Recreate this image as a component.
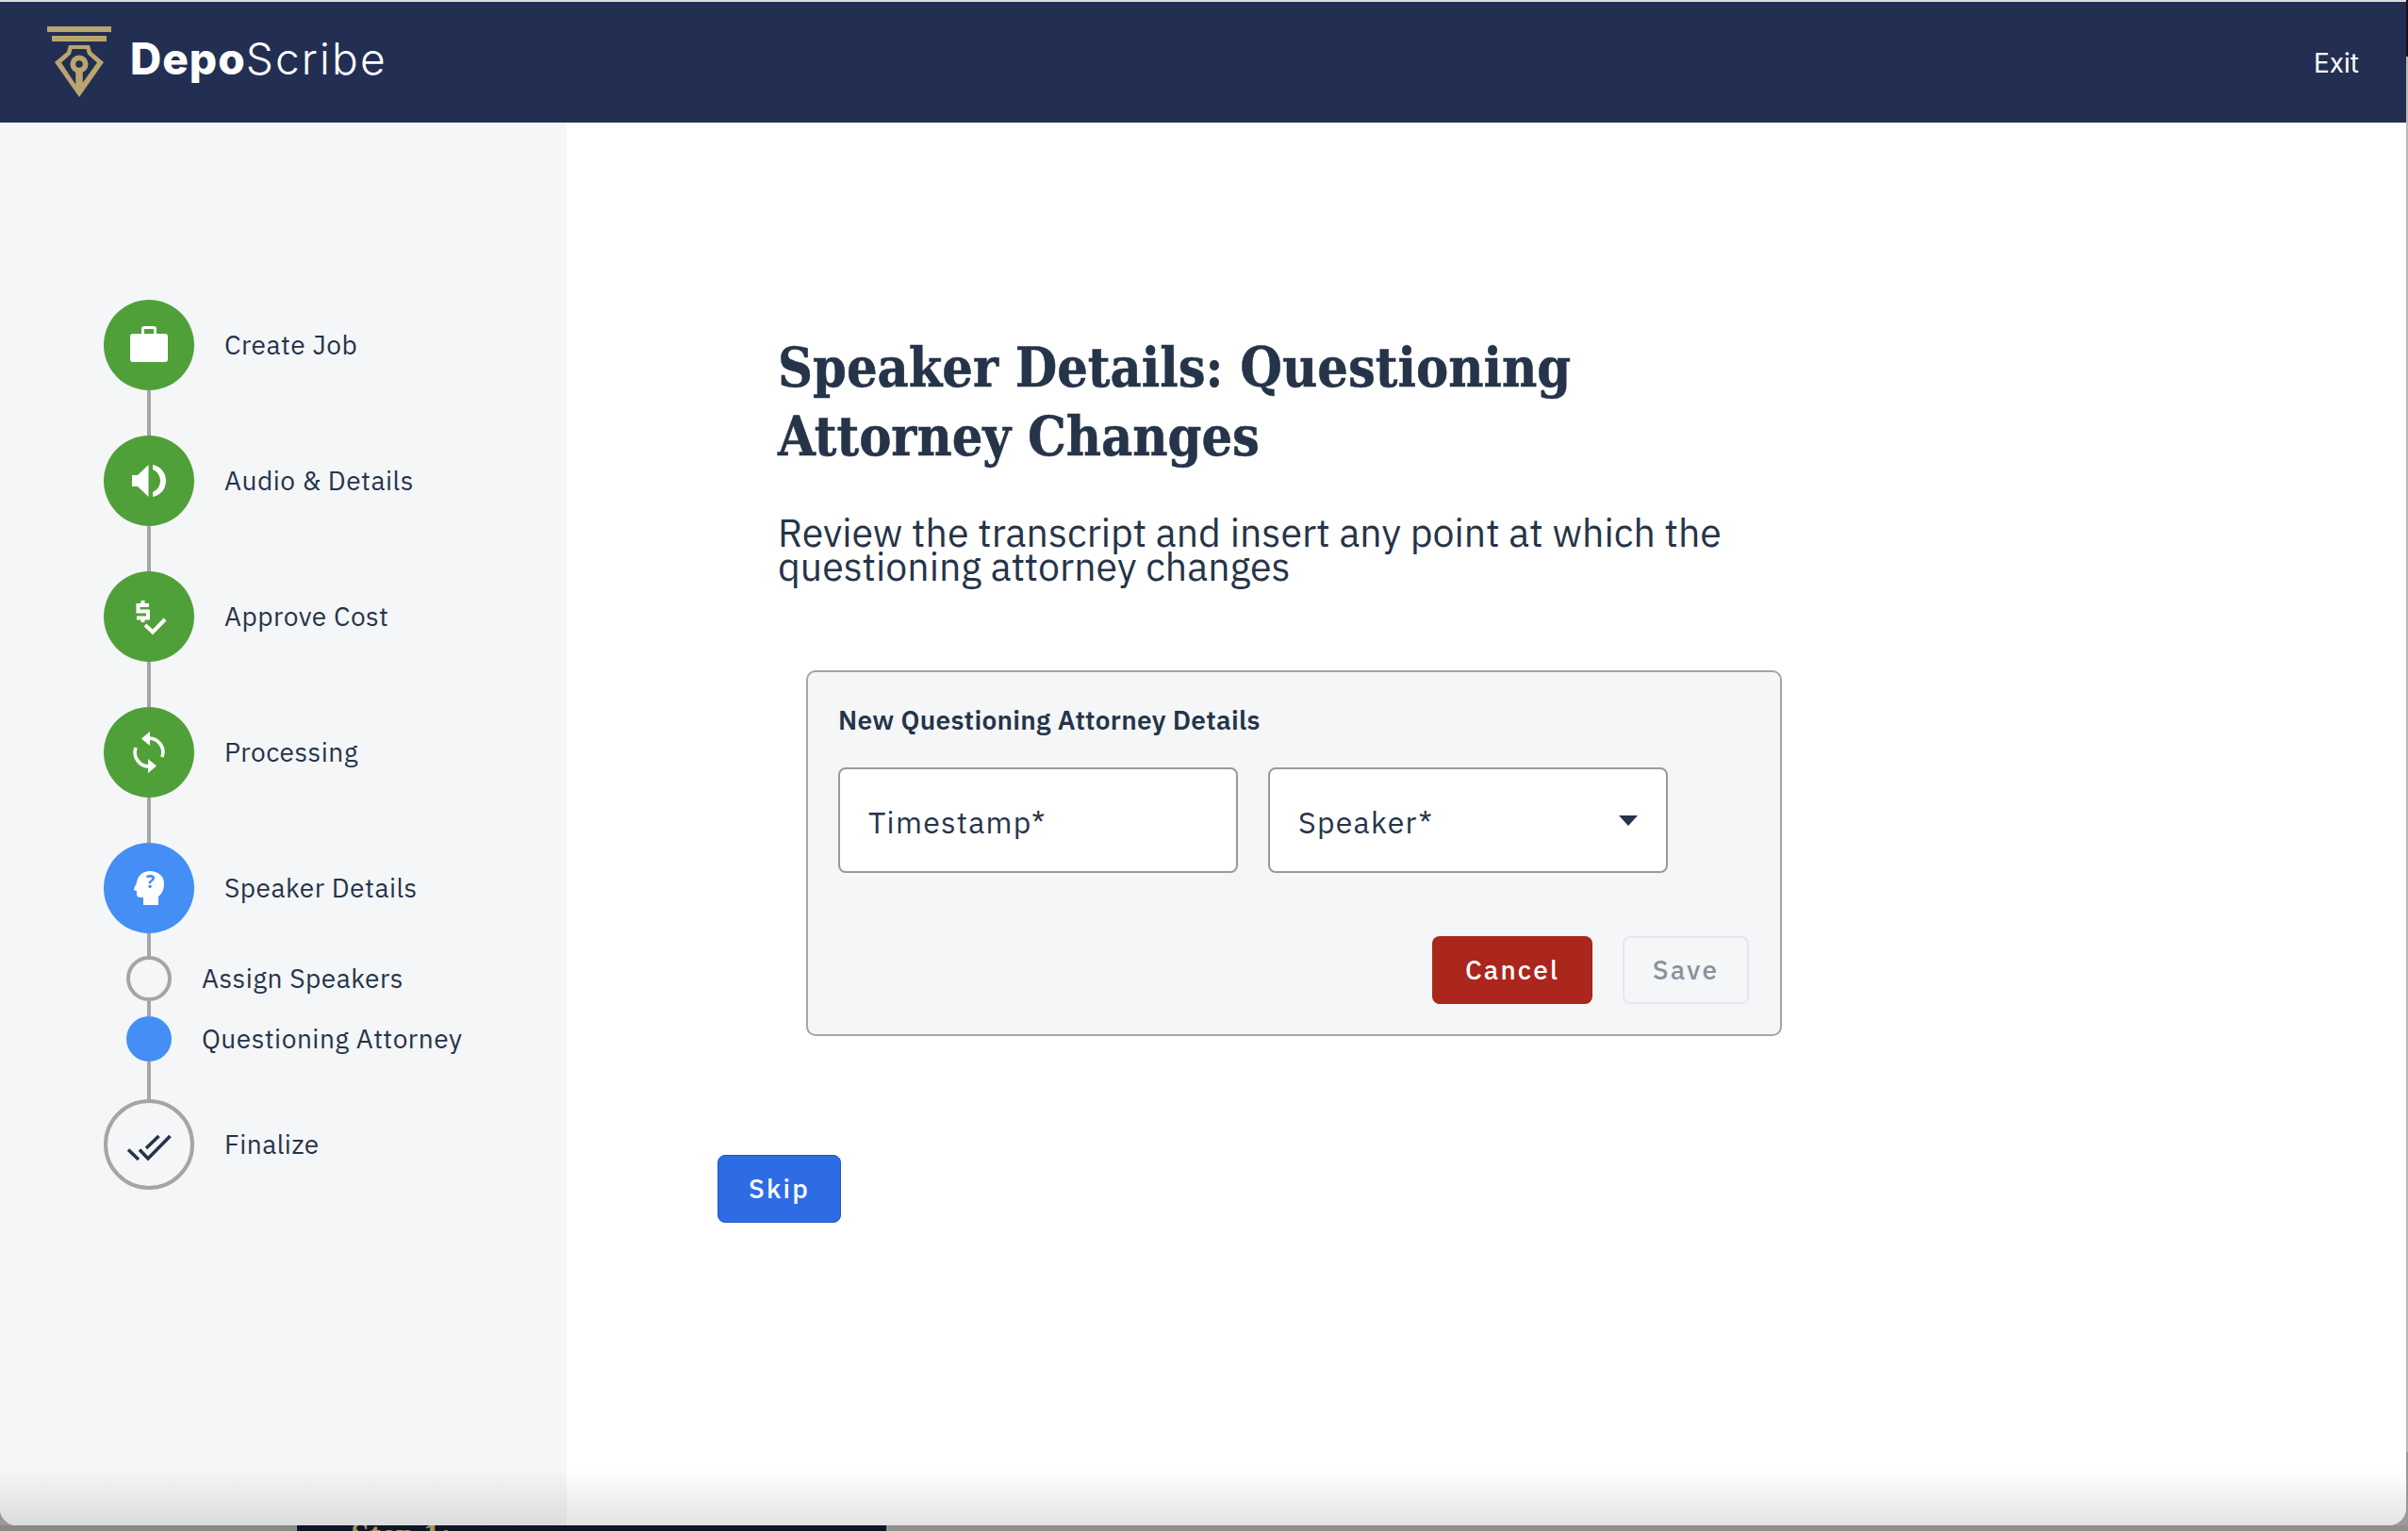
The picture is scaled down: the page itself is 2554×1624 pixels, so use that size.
<div class="desktop">
  <div class="backstrip"><span class="step-peek">Step 1:</span></div>
  <div class="shell">
    <header class="topbar">
      <div class="brand">
        <svg class="logo" width="80" height="90" viewBox="0 0 80 90" aria-hidden="true">
          <rect x="0" y="0" width="68" height="6" fill="#b9a56d" />
          <rect x="5" y="10" width="58" height="6" fill="#b9a56d" />
          <path d="M23 20 H45 L47 27 L60 38 L34 75 L8 38 L21 27 Z" fill="#b9a56d" />
          <path d="M26.5 24 H41.5 L43 29.5 L53 38.5 L37.5 60 V46 H30.5 V62 L15 38.5 L25 29.5 Z" fill="#222f53" />
          <circle cx="34" cy="40" r="9.5" fill="#b9a56d" />
          <circle cx="34" cy="40" r="3.8" fill="#222f53" />
          <rect x="30.5" y="46" width="7" height="24" fill="#b9a56d" />
        </svg>
        <span class="wordmark"><b>Depo</b>Scribe</span>
      </div>
      <span class="exit">Exit</span>
    </header>

    <div class="body">
      <aside class="sidebar">
        <div class="step">
          <span class="dot done">
            <svg width="96" height="96" viewBox="0 0 96 96"><path d="M41.5 36 V31 Q41.5 29.5 43 29.5 H53 Q54.5 29.5 54.5 31 V36" fill="none" stroke="#fff" stroke-width="3" /><rect x="28" y="36" width="40" height="30" rx="3" fill="#fff" /></svg>
          </span>
          <span class="label">Create Job</span>
        </div>
        <div class="line l48"></div>
        <div class="step">
          <span class="dot done">
            <svg width="96" height="96" viewBox="0 0 96 96"><path d="M30 42 H36 L47.5 31 V65 L36 54 H30 Z" fill="#fff" /><path d="M52 31 C62 33 66 41 66 48 C66 55 62 63 52 65 V60 C57 58 60 53 60 48 C60 43 57 38 52 36 Z" fill="#fff" /></svg>
          </span>
          <span class="label">Audio &amp; Details</span>
        </div>
        <div class="line l48"></div>
        <div class="step">
          <span class="dot done">
            <svg width="96" height="96" viewBox="0 0 96 96"><path d="M48 36 H36.5 V42.5 H47 V49.5 H35" fill="none" stroke="#fff" stroke-width="4" /><path d="M41.5 31 V36 M41.5 49 V54" stroke="#fff" stroke-width="4" /><path d="M44 57 L52 64.5 L65 51" fill="none" stroke="#fff" stroke-width="4" /></svg>
          </span>
          <span class="label">Approve Cost</span>
        </div>
        <div class="line l48"></div>
        <div class="step">
          <span class="dot done">
            <svg width="96" height="96" viewBox="0 0 96 96"><path d="M48 33 A15 15 0 0 1 62 53 M48 63 A15 15 0 0 1 34 43" fill="none" stroke="#fff" stroke-width="3.6" /><path d="M49 26 V41 L40 33.5 Z M47 70 V55 L56 62.5 Z" fill="#fff" /></svg>
          </span>
          <span class="label">Processing</span>
        </div>
        <div class="line l48"></div>
        <div class="step">
          <span class="dot active">
            <svg width="96" height="96" viewBox="0 0 96 96"><path d="M64 43 C64 35 57 30 49 30 C41 30 36 35 35 42 C35 44 32 47 32 49 C32 50 33 51 35 51 V55 C35 57 37 58 39 58 H42 V66 H58 V57 C62 54 64 49 64 43 Z" fill="#fff" /><text x="49.5" y="47.5" text-anchor="middle" class="q">?</text></svg>
          </span>
          <span class="label">Speaker Details</span>
        </div>
        <div class="line l24"></div>
        <div class="step sub">
          <span class="mini ring"></span>
          <span class="label">Assign Speakers</span>
        </div>
        <div class="line l16"></div>
        <div class="step sub">
          <span class="mini filled"></span>
          <span class="label">Questioning Attorney</span>
        </div>
        <div class="line l40"></div>
        <div class="step">
          <span class="dot todo">
            <svg width="96" height="96" viewBox="0 0 96 96" class="inring"><path d="M26 53.5 L37 64 M38 53.5 L47 63 L70.5 39 M45 52 L58.5 39" fill="none" stroke="#263449" stroke-width="3.6" /></svg>
          </span>
          <span class="label">Finalize</span>
        </div>
      </aside>

      <main class="main">
        <div class="intro">
          <h1>Speaker Details: Questioning Attorney Changes</h1>
          <p>Review the transcript and insert any point at which the questioning attorney changes</p>
          <section class="panel">
            <h2>New Questioning Attorney Details</h2>
            <div class="fields">
              <div class="field"><span>Timestamp*</span></div>
              <div class="field select"><span>Speaker*</span><i class="caret"></i></div>
            </div>
            <div class="actions">
              <button class="btn cancel">Cancel</button>
              <button class="btn save" disabled>Save</button>
            </div>
          </section>
        </div>
        <button class="btn skip">Skip</button>
      </main>
    </div>
    <div class="fade"></div>
  </div>
</div>

<style>
  :global(body) { margin: 0; background: #8f8f8c; }
  .desktop {
    position: relative;
    width: 2554px;
    height: 1624px;
    overflow: hidden;
    background: linear-gradient(#1a1020 0 60px, #b9b9b9 60px 1540px, #999 1540px);
    font-family: "IBM Plex Sans", "Noto Sans", sans-serif;
    color: #263449;
  }
  .backstrip {
    position: absolute;
    left: 0;
    right: 0;
    bottom: 0;
    height: 6px;
    background: linear-gradient(90deg, #8a8a85 0 315px, #0e1626 315px 940px, #8f8f8f 940px);
    overflow: hidden;
  }
  .step-peek {
    position: absolute;
    left: 372px;
    top: -10px;
    font: 700 36px/40px "Liberation Serif", serif;
    color: #a8935c;
  }
  .shell {
    position: absolute;
    left: 0;
    top: 2px;
    width: 2552px;
    height: 1616px;
    background: #fff;
    border-radius: 0 0 18px 18px;
    overflow: hidden;
    display: flex;
    flex-direction: column;
    box-shadow: 0 -2px 0 #ddd;
  }
  .topbar {
    flex: none;
    height: 128px;
    background: #222f53;
    display: flex;
    align-items: center;
    justify-content: space-between;
    padding: 0 50px 0 50px;
    color: #fff;
  }
  .brand { display: flex; align-items: flex-start; height: 128px; }
  .logo { margin-top: 26px; margin-right: 8px; flex: none; }
  .wordmark {
    font: 300 46px/52px Inter, sans-serif;
    margin-top: 34px;
    letter-spacing: 2.2px;
  }
  .wordmark b { font-weight: 800; letter-spacing: 1px; }
  .exit { font: 400 28px/32px Inter, "Liberation Sans", sans-serif; margin-top: 2px; }

  .body { flex: 1; display: flex; min-height: 0; }
  .sidebar {
    flex: none;
    width: 601px;
    box-sizing: border-box;
    background: #f4f6f8;
    padding: 188px 0 0 110px;
  }
  .step { display: flex; align-items: center; gap: 32px; }
  .label { font-size: 28px; line-height: 36px; letter-spacing: 0.55px; white-space: nowrap; }
  .dot {
    flex: none;
    width: 96px;
    height: 96px;
    border-radius: 50%;
    display: block;
    box-sizing: border-box;
  }
  .dot svg { display: block; }
  .dot.done { background: #50a03a; }
  .dot.active { background: #448ef6; }
  .dot.todo { border: 4px solid #a5a5a5; }
  .inring { margin: -4px; }
  .q { font: 700 20px "Noto Sans", sans-serif; fill: #448ef6; }
  .line { width: 4px; margin-left: 46px; background: #a5a5a5; }
  .l48 { height: 48px; }
  .l24 { height: 24px; }
  .l16 { height: 16px; }
  .l40 { height: 40px; }
  .step.sub { margin-left: 24px; gap: 32px; height: 48px; }
  .mini {
    flex: none;
    width: 48px;
    height: 48px;
    border-radius: 50%;
    box-sizing: border-box;
  }
  .mini.ring { border: 4px solid #a5a5a5; }
  .mini.filled { background: #448ef6; }

  .main { flex: 1; padding: 0 0 0 160px; }
  .intro { padding: 223px 0 0 64px; width: 1100px; }
  h1 {
    margin: 0;
    font-family: "DejaVu Serif", "Liberation Serif", serif;
    font-weight: 700;
    font-stretch: condensed;
    font-size: 57px;
    line-height: 73px;
    width: 900px;
    color: #263449;
    -webkit-text-stroke: 0.5px #263449;
  }
  p {
    margin: 48px 0 0;
    font-size: 41px;
    line-height: 36px;
    letter-spacing: 0.06px;
    width: 1060px;
  }
  .panel {
    box-sizing: border-box;
    width: 1035px;
    height: 388px;
    margin: 92px 0 0 30px;
    padding: 33px 33px 0 32px;
    background: #f4f6f8;
    border: 2px solid #a5a5a5;
    border-radius: 10px;
  }
  h2 { margin: 0; font-size: 28px; line-height: 36px; font-weight: 600; letter-spacing: 0.33px; }
  .fields { display: flex; gap: 32px; margin-top: 32px; }
  .field {
    box-sizing: border-box;
    width: 424px;
    height: 112px;
    background: #fff;
    border: 2px solid #999;
    border-radius: 8px;
    display: flex;
    align-items: center;
    justify-content: space-between;
    padding: 3px 30px 0 30px;
    font-size: 32px;
    letter-spacing: 1.3px;
  }
  .caret {
    width: 0;
    height: 0;
    border-left: 10px solid transparent;
    border-right: 10px solid transparent;
    border-top: 11px solid #263449;
    margin-top: -3px;
  }
  .actions { display: flex; justify-content: flex-end; gap: 32px; margin-top: 67px; }
  .btn {
    box-sizing: border-box;
    height: 72px;
    border-radius: 8px;
    font: 500 28px/36px "IBM Plex Sans", "Noto Sans", sans-serif;
    letter-spacing: 2.2px;
    padding: 0;
  }
  .cancel { width: 170px; background: #ab261c; color: #fff; border: 0; }
  .save { width: 134px; background: #f4f6f8; color: #8a919c; border: 2px solid #e5e7eb; }
  .skip { display: block; width: 131px; margin-top: 126px; background: #2e6ce6; color: #fff; border: 1px solid #1e57c8; }

  .fade {
    position: absolute;
    left: 0;
    right: 0;
    bottom: 0;
    height: 60px;
    background: linear-gradient(rgba(0,0,0,0), rgba(0,0,0,0.11));
    pointer-events: none;
  }
</style>
